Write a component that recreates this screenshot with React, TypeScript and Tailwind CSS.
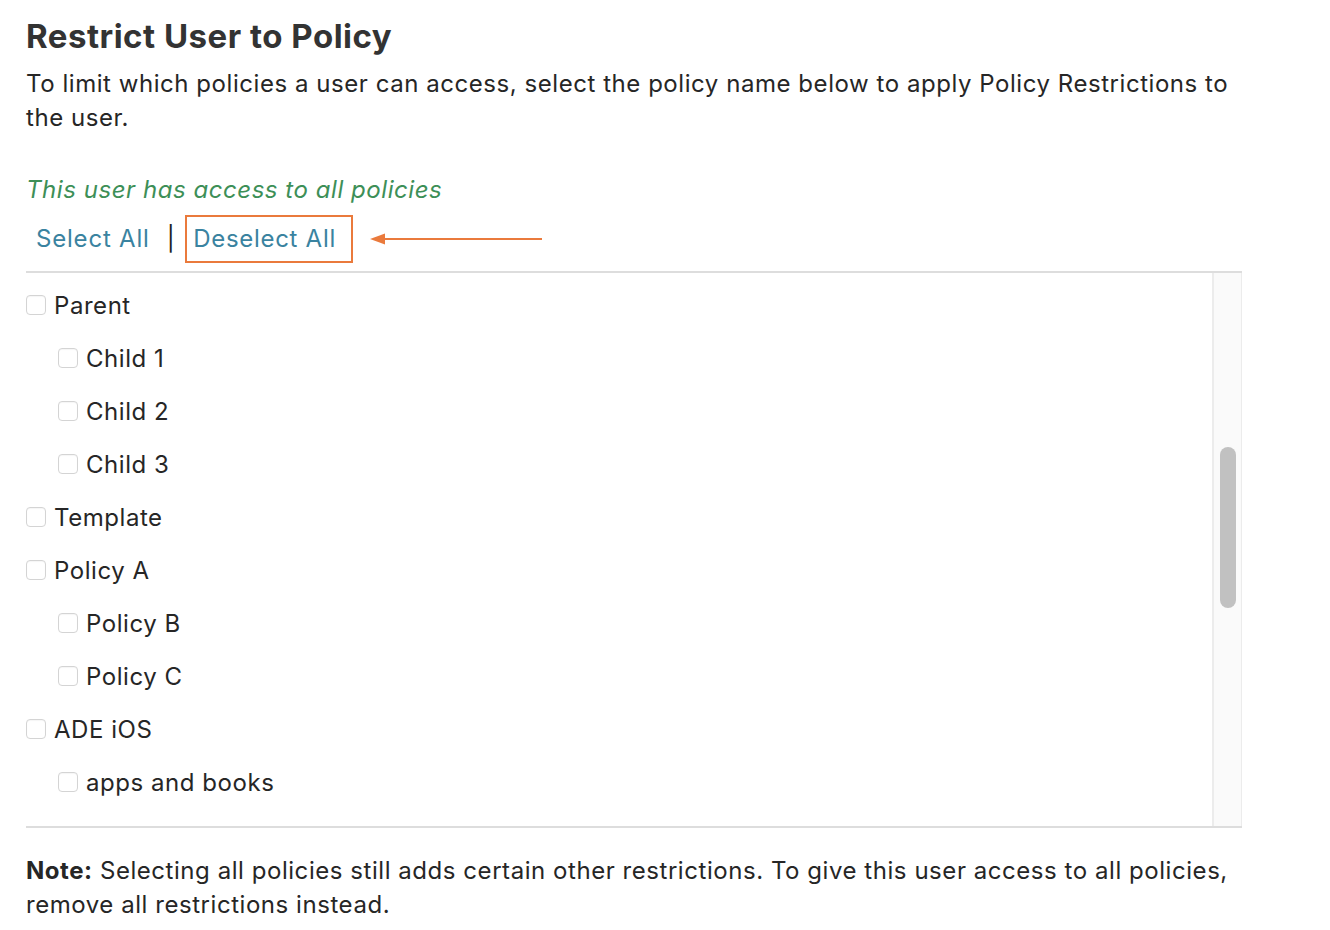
import React from "react";

type Item = { label: string; child?: boolean };

const items: Item[] = [
  { label: "Parent" },
  { label: "Child 1", child: true },
  { label: "Child 2", child: true },
  { label: "Child 3", child: true },
  { label: "Template" },
  { label: "Policy A" },
  { label: "Policy B", child: true },
  { label: "Policy C", child: true },
  { label: "ADE iOS" },
  { label: "apps and books", child: true },
];

const Checkbox = () => (
  <span className="inline-block w-[20px] h-[20px] rounded-[4px] border border-[#d4d4d4] bg-white shrink-0 mt-[4px] shadow-[inset_0_1px_1px_rgba(0,0,0,0.04)]"></span>
);

export default function App() {
  return (
    <div className="w-[1330px] h-[930px] bg-white pl-[26px] pt-[14px] text-[#262626] font-['Inter',sans-serif] tracking-[0.55px] overflow-hidden">
      <div className="w-[1216px]">
        <h1 className="text-[33px] font-bold text-[#333333] leading-[44px] tracking-[0.5px]">
          Restrict User to Policy
        </h1>
        <p className="text-[24px] leading-[34px] mt-[9px] pr-[6px]">
          To limit which policies a user can access, select the policy name below to apply Policy Restrictions to the user.
        </p>

        <p className="text-[24px] leading-[34px] mt-[38px] italic text-[#3d8f57]">
          This user has access to all policies
        </p>

        <div className="flex items-center mt-[8px] h-[48px] text-[24px]">
          <button className="text-[#3a83a0] ml-[10px] tracking-[0.8px]">Select All</button>
          <span className="ml-[17px] mr-[10px] text-[#222]">|</span>
          <button className="text-[#3a83a0] border-2 border-[#ea7a3c] h-[48px] pl-[6px] pr-[15px] tracking-[0.7px]">
            Deselect All
          </button>
          {/* annotation arrow */}
          <svg width="173" height="14" viewBox="0 0 173 14" className="ml-[17px]">
            <path d="M0 7 L15 1.5 L15 12.5 Z" fill="#ea7a3c" />
            <line x1="12" y1="7" x2="172" y2="7" stroke="#ea7a3c" strokeWidth="2" />
          </svg>
        </div>

        <div className="mt-[8px] border-t-2 border-b-2 border-[#dddddd] h-[557px] flex">
          <div className="flex-1 pt-[18px]">
            {items.map((it) => (
              <div
                key={it.label}
                className={`flex items-start gap-[8px] h-[53px] text-[24px] leading-[30px] ${it.child ? "pl-[32px]" : ""}`}
              >
                <Checkbox />
                <span>{it.label}</span>
              </div>
            ))}
          </div>
          <div className="w-[30px] bg-[#fafafa] border-l-2 border-r border-[#ececec] pt-[174px] flex justify-center">
            <div className="w-[16px] h-[161px] rounded-full bg-[#c1c1c1]"></div>
          </div>
        </div>

        <p className="text-[24px] leading-[34px] mt-[26px]">
          <span className="font-bold">Note:</span> Selecting all policies still adds certain other restrictions. To give this user access to all policies, remove all restrictions instead.
        </p>
      </div>
    </div>
  );
}
